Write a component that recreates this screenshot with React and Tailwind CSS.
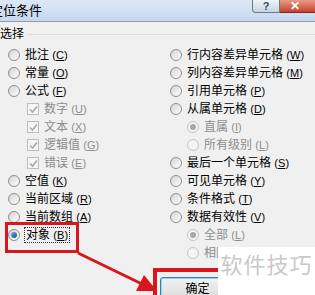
import React from "react";

const font = { fontFamily: "'Liberation Sans', 'Noto Sans CJK SC', sans-serif" };

const Radio = ({ checked, disabled }) => (
  <span
    className={`relative flex h-[12px] w-[12px] shrink-0 items-center justify-center rounded-full border ${
      disabled ? "border-[#c4c4c4] bg-[#f4f4f4]" : "border-[#8f8f8f] bg-gradient-to-br from-[#d4d4d4] to-[#ffffff]"
    }`}
  >
    {checked && (
      <span
        className={`h-[6px] w-[6px] rounded-full ${
          disabled ? "bg-[#a8a8a8]" : "bg-gradient-to-br from-[#6fb2ee] to-[#0d4a92]"
        }`}
      />
    )}
  </span>
);

const Check = () => (
  <span className="flex h-[12px] w-[12px] shrink-0 items-center justify-center border border-[#bdbdbd] bg-[#f5f5f5]">
    <svg width="9" height="9" viewBox="0 0 9 9">
      <path d="M1 4.5 L3.5 7 L8 1.5" fill="none" stroke="#a9a9a9" strokeWidth="1.6" />
    </svg>
  </span>
);

const Label = ({ text, k, disabled, focus }) => (
  <span
    className={`text-[12px] leading-[14px] whitespace-nowrap ${disabled ? "text-[#8d8d8d]" : "text-black"} ${
      focus ? "outline outline-1 outline-dotted outline-[#333] px-[1px]" : ""
    }`}
  >
    {text} <span className="text-[11px]">(<span className="underline">{k}</span>)</span>
  </span>
);

const Row = ({ kind = "radio", indent, checked, disabled, text, k, focus }) => (
  <div className={`flex h-[18px] items-center gap-[5px] ${indent}`}>
    {kind === "check" ? <Check /> : <Radio checked={checked} disabled={disabled} />}
    <Label text={text} k={k} disabled={disabled} focus={focus} />
  </div>
);

export default function App() {
  return (
    <div className="relative h-[295px] w-[315px] overflow-hidden bg-[#f0f0f0]" style={font}>
      {/* title bar */}
      <div className="relative flex h-[22px] items-start border-b border-[#8c9cb1] bg-gradient-to-b from-[#dce8f6] to-[#c6d8ee]">
        <span className="ml-[-10px] mt-[3px] text-[13px] leading-[15px] text-black">定位条件</span>
        <div className="ml-auto flex">
          <div className="flex h-[13px] w-[28px] items-center justify-center rounded-bl-[4px] border border-t-0 border-[#6c7a8c] bg-gradient-to-b from-[#eef3f9] to-[#c9d5e3] text-[11px] font-bold leading-none text-[#3b4a5e]">
            ?
          </div>
          <div className="flex h-[13px] w-[35px] items-center justify-start border-b border-[#7a2a1c] bg-gradient-to-b from-[#e99a88] to-[#c5402a] pl-[10px] text-[12px] font-bold leading-none text-white">
            ✕
          </div>
        </div>
      </div>

      {/* group label */}
      <div className="flex h-[24px] items-center">
        <span className="text-[12px] leading-[14px]">选择</span>
        <div className="ml-[4px] h-px flex-1 bg-[#d5dfe5]" />
      </div>

      <div className="grid grid-cols-[170px_1fr]">
        <div className="pl-[8px]">
          <Row text="批注" k="C" />
          <Row text="常量" k="O" />
          <Row text="公式" k="F" />
          <Row kind="check" indent="ml-[19px]" disabled text="数字" k="U" />
          <Row kind="check" indent="ml-[19px]" disabled text="文本" k="X" />
          <Row kind="check" indent="ml-[19px]" disabled text="逻辑值" k="G" />
          <Row kind="check" indent="ml-[19px]" disabled text="错误" k="E" />
          <Row text="空值" k="K" />
          <Row text="当前区域" k="R" />
          <Row text="当前数组" k="A" />
          <Row text="对象" k="B" checked focus />
        </div>
        <div>
          <Row text="行内容差异单元格" k="W" />
          <Row text="列内容差异单元格" k="M" />
          <Row text="引用单元格" k="P" />
          <Row text="从属单元格" k="D" />
          <Row indent="ml-[17px]" checked disabled text="直属" k="I" />
          <Row indent="ml-[17px]" disabled text="所有级别" k="L" />
          <Row text="最后一个单元格" k="S" />
          <Row text="可见单元格" k="Y" />
          <Row text="条件格式" k="T" />
          <Row text="数据有效性" k="V" />
          <Row indent="ml-[17px]" checked disabled text="全部" k="L" />
          <Row indent="ml-[17px]" disabled text="相同" k="E" />
        </div>
      </div>

      {/* OK button */}
      <div className="absolute left-[160px] top-[277px] flex h-[26px] w-[75px] items-start justify-center rounded-[3px] border border-[#3c7fb1] bg-gradient-to-b from-[#f2f2f2] to-[#d8d8d8] pt-[4px] text-[12px] leading-[14px] shadow-[inset_0_0_0_1px_#8fd3f5]">
        确定
      </div>

      {/* annotations */}
      <div className="absolute left-[5px] top-[222px] h-[31px] w-[74px] border-[3px] border-[#d7161d]" />
      <div className="absolute left-[153px] top-[268px] h-[40px] w-[90px] border-[4px] border-[#d7161d]" />
      <svg className="absolute left-0 top-0" width="315" height="295">
        <line x1="78" y1="253" x2="142" y2="284" stroke="#d7161d" strokeWidth="3" />
        <polygon points="157,291 144,275 136,291" fill="#d7161d" />
      </svg>

      {/* watermark */}
      <div className="absolute left-[218px] top-[247px] flex h-[48px] w-[97px] items-start justify-center bg-white pt-[6px]">
        <span className="text-[22px] leading-[26px] tracking-[1px] text-[#c9c9c9]">软件技巧</span>
      </div>
    </div>
  );
}
